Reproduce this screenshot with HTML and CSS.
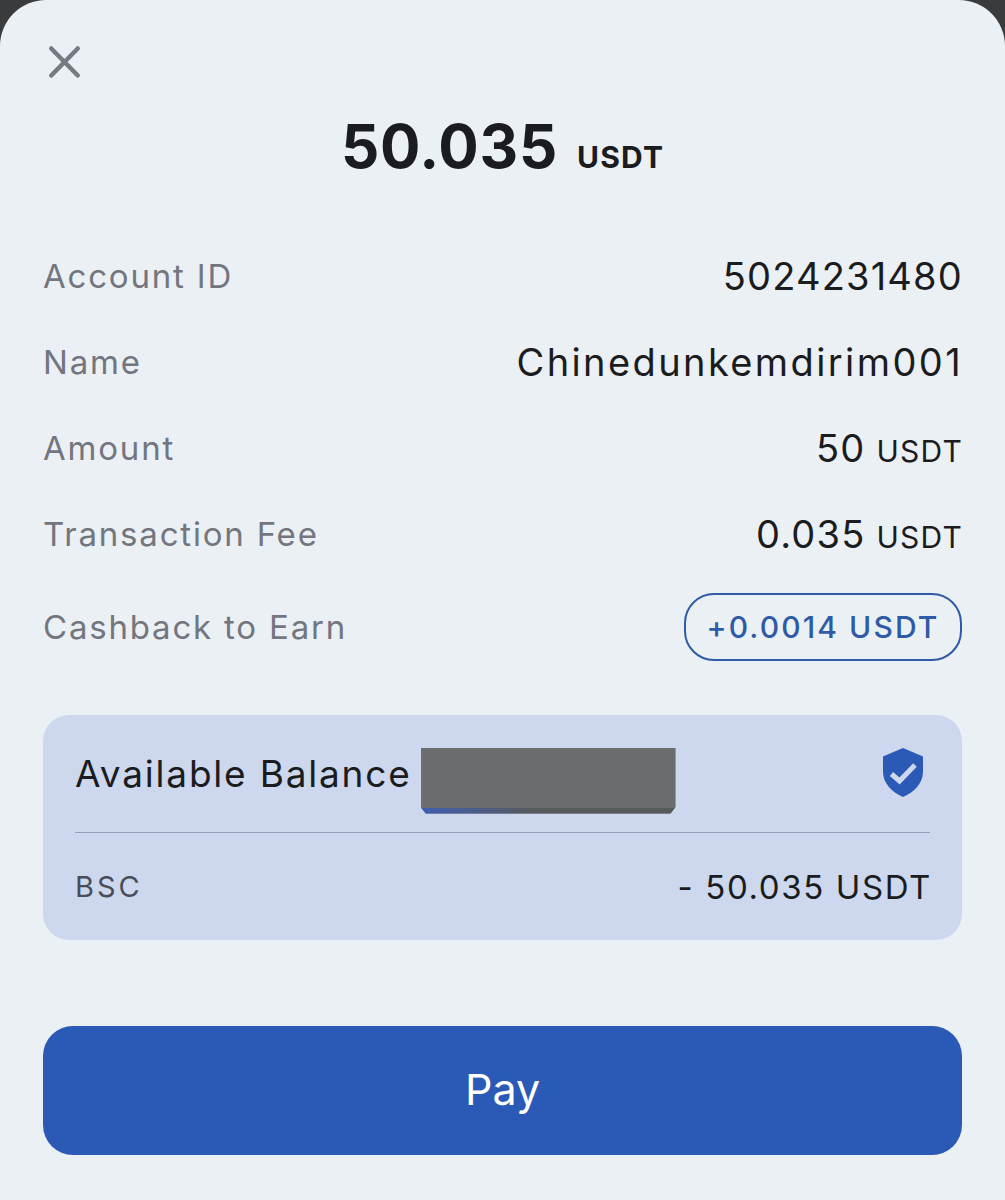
FILE: index.html
```html
<!DOCTYPE html>
<html lang="en">
<head>
<meta charset="utf-8">
<title>Pay</title>
<link rel="stylesheet" href="styles.css">
</head>
<body>
<main class="sheet">
  <div class="close-row">
    <svg class="close" width="36" height="36" viewBox="0 0 36 36" aria-label="Close"><path d="M4.250 4.500L30.750 31.500M30.750 4.500L4.250 31.500" fill="none" stroke="#777a82" stroke-width="4.5" stroke-linecap="round"/></svg>
  </div>
  <h1 class="total"><span class="total-num">50.035</span><span class="total-unit">USDT</span></h1>
  <dl class="rows">
    <div class="row"><dt>Account ID</dt><dd>5024231480</dd></div>
    <div class="row"><dt>Name</dt><dd class="name-value">Chinedunkemdirim001</dd></div>
    <div class="row"><dt>Amount</dt><dd>50<span class="unit">USDT</span></dd></div>
    <div class="row"><dt>Transaction Fee</dt><dd>0.035<span class="unit">USDT</span></dd></div>
    <div class="row row-cash"><dt>Cashback to Earn</dt><dd><span class="pill">+0.0014 USDT</span></dd></div>
  </dl>
  <section class="card">
    <div class="card-top">
      <span class="bal-label">Available Balance</span>
      <span class="redact"></span>
      <svg class="shield" width="40" height="49" viewBox="0 0 40 49"><path d="M20 0L40 8.500V24C40 35 31 44.500 20 49C9 44.500 0 35 0 24V8.500Z" fill="#2a5ab5"/><path d="M8.500 26L16.500 33L32 17" fill="none" stroke="#cdd8ef" stroke-width="5"/></svg>
    </div>
    <div class="card-bottom">
      <span class="chain">BSC</span>
      <span class="debit">- 50.035 USDT</span>
    </div>
  </section>
  <button class="pay" type="button">Pay</button>
</main>
</body>
</html>
```

FILE: styles.css
```css
* { box-sizing: border-box; }
html, body { margin: 0; padding: 0; height: 100%; }
body {
  background: #3a3b3d;
  font-family: "Inter", "Liberation Sans", sans-serif;
  color: #1b1c20;
  overflow: hidden;
}
.sheet {
  height: 1200px;
  padding: 0 43px;
  background: #ebf0f4;
  border-radius: 46px 46px 0 0;
  display: flex;
  flex-direction: column;
}
.close-row { height: 44px; margin-top: 44px; margin-left: 4px; }
.close { display: block; }
.total {
  margin: 22px 0 0;
  height: 72px;
  display: flex;
  justify-content: center;
  align-items: baseline;
  gap: 19px;
  font-weight: 700;
  line-height: 72px;
}
.total-num { font-size: 60px; letter-spacing: 0.7px; }
.total-unit { font-size: 30px; letter-spacing: 1.2px; }
.rows { margin: 0; margin-top: 51px; }
.row {
  height: 86px;
  display: flex;
  justify-content: space-between;
  align-items: center;
  font-size: 33px;
}
.row dt { color: #73767f; letter-spacing: 1.8px; }
.row dd { margin: 0 -1px 0 0; font-size: 38px; letter-spacing: 1.2px; display: flex; align-items: baseline; }
.row dd.name-value { letter-spacing: 2.4px; }
.unit { font-size: 30px; margin-left: 11px; letter-spacing: 1.2px; }
.row-cash { height: 68px; margin-top: 16px; }
.row-cash dd { display: block; margin-right: 0; }
.pill {
  display: flex;
  align-items: center;
  justify-content: center;
  width: 278px;
  height: 68px;
  border: 2.500px solid #2e5aa6;
  border-radius: 30px;
  color: #2e5aa6;
  font-size: 30px;
  font-weight: 500;
  letter-spacing: 2.1px;
}
.card {
  margin-top: 54px;
  height: 225px;
  background: #cdd8ef;
  border-radius: 26px;
  padding: 0 32px;
}
.card-top {
  height: 118px;
  display: flex;
  align-items: center;
  border-bottom: 1.500px solid #949db9;
}
.bal-label { font-size: 37px; letter-spacing: 1.8px; }
.redact {
  width: 255px;
  height: 66px;
  margin-left: 9px;
  margin-top: 14px;
  background:
    linear-gradient(90deg, #3f5fb0 0, #58595b 45%) bottom / 100% 6px no-repeat,
    linear-gradient(#6b6c6e, #6b6c6e);
  clip-path: polygon(0 0, 100% 0, 100% 90%, 98% 100%, 2% 100%, 0 90%);
}
.shield { margin-left: auto; margin-right: 7px; margin-top: -2px; }
.card-bottom {
  height: 107px;
  display: flex;
  justify-content: space-between;
  align-items: center;
}
.chain { font-size: 29px; color: #4a4d57; letter-spacing: 3px; }
.debit { font-size: 33px; letter-spacing: 1.6px; margin-right: -2px; }
.pay {
  margin-top: 86px;
  height: 129px;
  flex: none;
  border: 0;
  border-radius: 30px;
  padding-bottom: 4px;
  background: #2a5ab5;
  color: #fff;
  font-family: inherit;
  font-size: 43px;
}
```
